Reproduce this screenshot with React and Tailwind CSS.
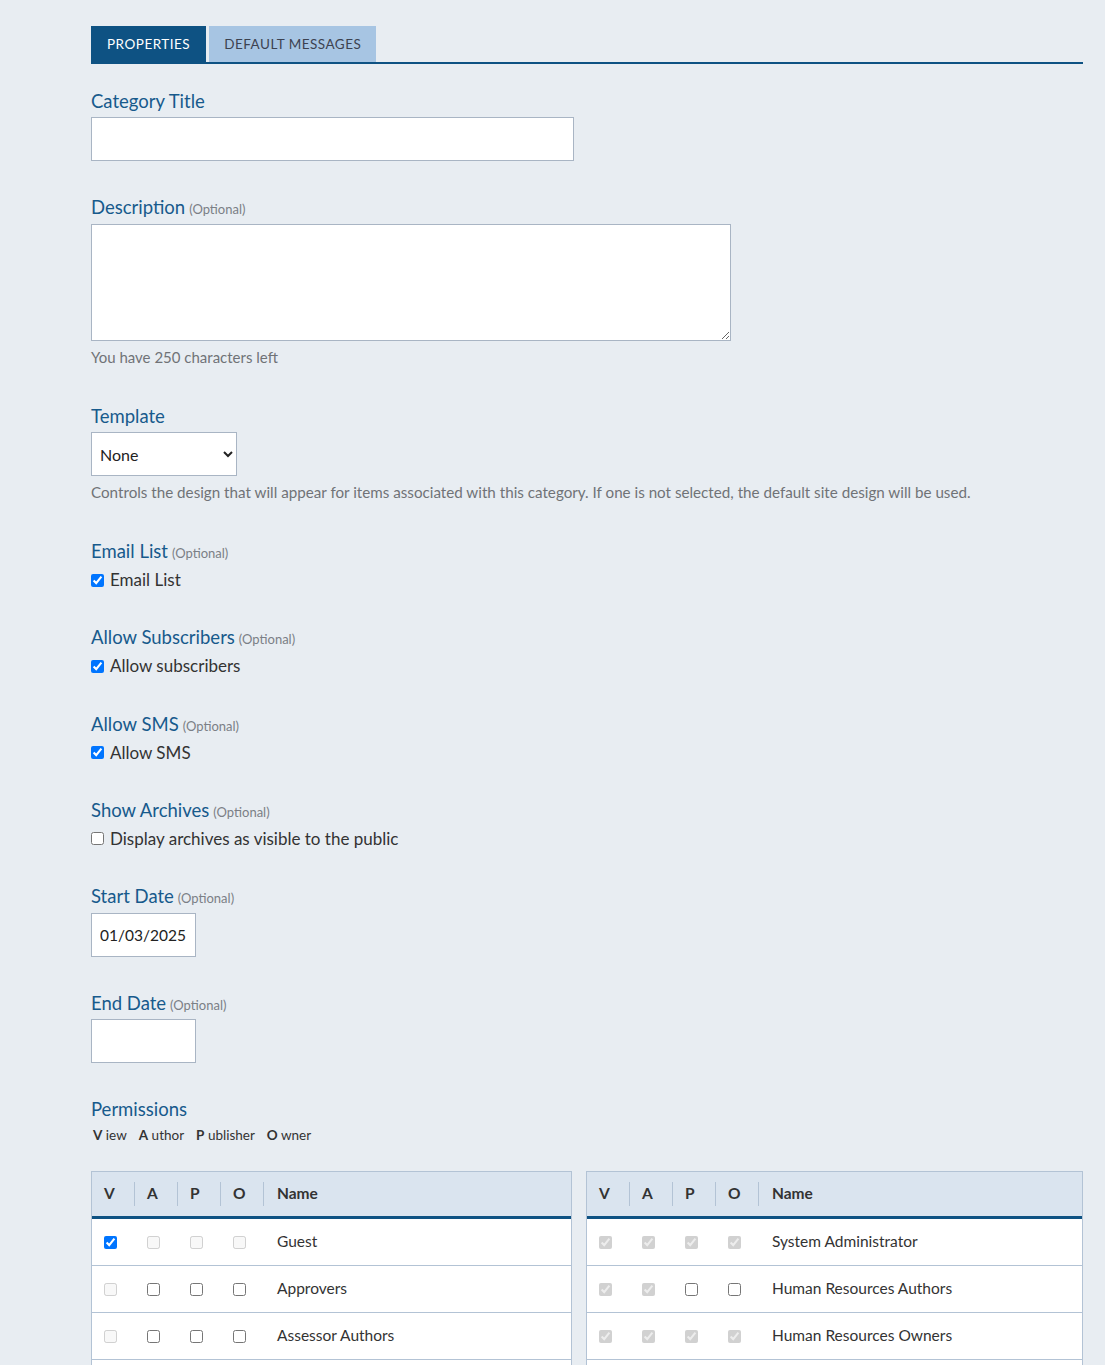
import { useState } from 'react';

const leftRows = [
  { name: 'Guest', v: 'checked', a: 'disabled', p: 'disabled', o: 'disabled' },
  { name: 'Approvers', v: 'disabled', a: 'open', p: 'open', o: 'open' },
  { name: 'Assessor Authors', v: 'disabled', a: 'open', p: 'open', o: 'open' },
  { name: 'Assessor Owners', v: 'disabled', a: 'open', p: 'open', o: 'open' },
];

const rightRows = [
  { name: 'System Administrator', v: 'locked', a: 'locked', p: 'locked', o: 'locked' },
  { name: 'Human Resources Authors', v: 'locked', a: 'locked', p: 'open', o: 'open' },
  { name: 'Human Resources Owners', v: 'locked', a: 'locked', p: 'locked', o: 'locked' },
  { name: 'Human Resources Publishers', v: 'locked', a: 'locked', p: 'locked', o: 'open' },
];

function Box({ state }) {
  if (state === 'checked') return <input type="checkbox" defaultChecked className="w-[13px] h-[13px] m-0" />;
  if (state === 'disabled') return <input type="checkbox" disabled className="w-[13px] h-[13px] m-0" />;
  if (state === 'locked') return <input type="checkbox" disabled defaultChecked className="w-[13px] h-[13px] m-0" />;
  return <input type="checkbox" className="w-[13px] h-[13px] m-0" />;
}

function Label({ children, optional, gap = 'mb-1' }) {
  return (
    <div className={`h-6 leading-6 text-[18.5px] text-[#175a8c] ${gap}`}>
      {children}
      {optional && <span className="text-[13px] text-[#7b7f86] ml-1">(Optional)</span>}
    </div>
  );
}

function CheckField({ label, text, checked }) {
  return (
    <div className="mb-[35.25px]">
      <Label optional>{label}</Label>
      <label className="flex items-center gap-[6px] h-5 mt-[7px] leading-5 text-[17px] text-[#333]">
        <input type="checkbox" defaultChecked={checked} className="w-[13px] h-[13px] m-0" />
        {text}
      </label>
    </div>
  );
}

function PermTable({ rows, className }) {
  return (
    <div className={`border border-[#b3c3d5] bg-white ${className}`}>
      <div className="flex items-center h-[47px] bg-[#dae4ef] border-b-[3px] border-[#0e5283] text-[15.5px] font-bold text-[#333]">
        {['V', 'A', 'P', 'O'].map((h) => (
          <div key={h} className="w-[43px] flex items-center h-full">
            <span className="flex-1 pl-3">{h}</span>
            <span className="w-px h-[24px] bg-[#b3c3d5]" />
          </div>
        ))}
        <div className="pl-[13px]">Name</div>
      </div>
      {rows.map((r) => (
        <div key={r.name} className="flex items-center h-[47px] border-b border-[#b3c3d5] text-[15.5px] text-[#333]">
          {['v', 'a', 'p', 'o'].map((k) => (
            <div key={k} className="w-[43px] pl-3 flex items-center">
              <Box state={r[k]} />
            </div>
          ))}
          <div className="pl-[13px]">{r.name}</div>
        </div>
      ))}
    </div>
  );
}

export default function App() {
  const [tab, setTab] = useState('properties');

  return (
    <div className="min-h-screen bg-[#e8edf2] pt-[26px] pl-[91px] pr-[22px] font-['Lato',sans-serif]">
      <div className="flex gap-[3px] border-b-2 border-[#0e5283] tracking-[0.5px] text-[13.5px]">
        <button
          onClick={() => setTab('properties')}
          className="h-9 px-4 bg-[#0e5283] text-white"
        >
          PROPERTIES
        </button>
        <button
          onClick={() => setTab('messages')}
          className="h-9 px-[15px] bg-[#a7c5e3] text-[#3c4250]"
        >
          DEFAULT MESSAGES
        </button>
      </div>

      <div className="mt-[25px]">
        <div className="mb-[34px]">
          <Label>Category Title</Label>
          <input type="text" className="block w-[483px] h-[44px] bg-white border border-[#a9b5c4]" />
        </div>

        <div className="mb-[37px]">
          <Label optional>Description</Label>
          <textarea className="block w-[640px] h-[117px] mt-[5px] bg-white border border-[#a9b5c4]" />
          <div className="mt-[6px] h-5 leading-5 text-[15px] text-[#707377]">You have 250 characters left</div>
        </div>

        <div className="mb-[37px]">
          <Label>Template</Label>
          <select className="block w-[146px] h-[44px] pl-1 pr-2 bg-white border border-[#a9b5c4] text-[16px] text-[#222]">
            <option>None</option>
          </select>
          <div className="mt-[6px] h-5 leading-5 text-[15.2px] text-[#707377]">
            Controls the design that will appear for items associated with this category. If one is not selected, the default site design will be used.
          </div>
        </div>

        <CheckField label="Email List" text="Email List" checked />
        <CheckField label="Allow Subscribers" text="Allow subscribers" checked />
        <CheckField label="Allow SMS" text="Allow SMS" checked />
        <CheckField label="Show Archives" text="Display archives as visible to the public" checked={false} />

        <div className="mb-[34px]">
          <Label optional gap="mb-[5px]">Start Date</Label>
          <input type="text" defaultValue="01/03/2025" className="block w-[105px] h-[44px] px-2 bg-white border border-[#a9b5c4] text-[15.5px] text-[#222]" />
        </div>

        <div className="mb-[34px]">
          <Label optional>End Date</Label>
          <input type="text" className="block w-[105px] h-[44px] px-2 bg-white border border-[#a9b5c4]" />
        </div>

        <div>
          <Label>Permissions</Label>
          <div className="flex gap-3 h-5 mt-[2px] leading-5 text-[13.5px] text-[#333] pl-[2px]">
            <span><b>V</b> iew</span>
            <span><b>A</b> uthor</span>
            <span><b>P</b> ublisher</span>
            <span><b>O</b> wner</span>
          </div>
          <div className="flex gap-[14px] mt-[26px]">
            <PermTable rows={leftRows} className="w-[481px]" />
            <PermTable rows={rightRows} className="flex-1" />
          </div>
        </div>
      </div>
    </div>
  );
}
